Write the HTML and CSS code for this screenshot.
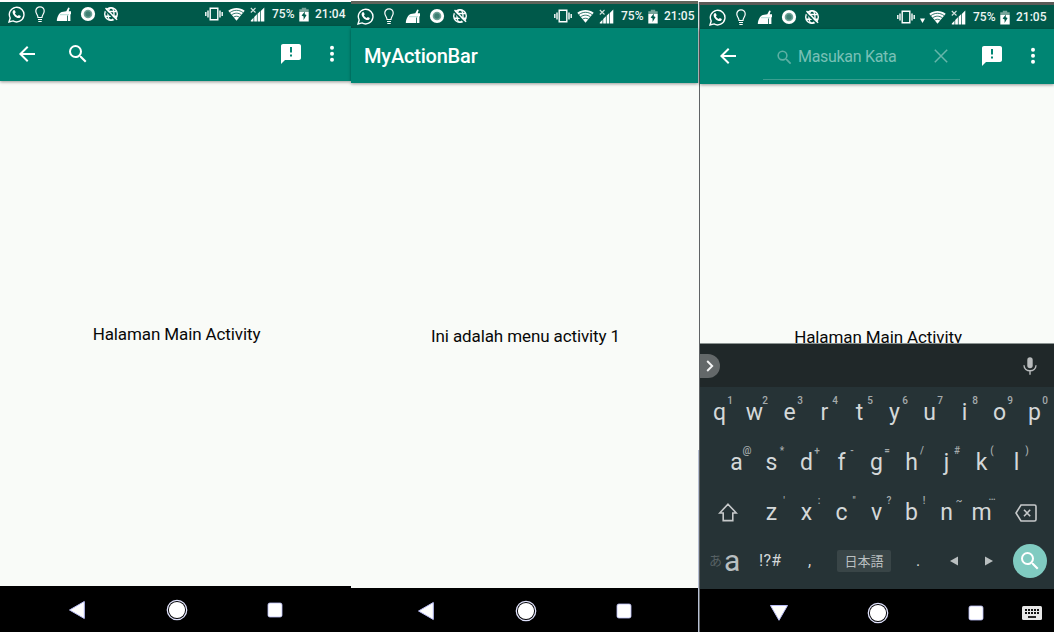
FILE: index.html
```
<!DOCTYPE html>
<html lang="id">
<head>
<meta charset="utf-8">
<title>MyActionBar</title>
<link rel="stylesheet" href="styles.css">
</head>
<body>
<svg class="defs" aria-hidden="true">
  <symbol id="whatsapp" viewBox="0 0 17 17"><path d="M1 16l1.200-4A7.300 7.300 0 1 1 5 14.900z" fill="none" stroke="#fff" stroke-width="1.400"/><path d="M5.600 4.300l1.200 0 .9 2-.8 1.100c.7 1.200 1.500 2 2.900 2.600l1-1 2 1c0 1.500-1 2-2 2.100C7.600 11.900 5 9 4.600 6.500c0-1 .4-1.800 1-2.200z" fill="#fff"/></symbol>
  <symbol id="bulb" viewBox="0 0 10 17"><path d="M3 11.500C3 9 .8 8 .8 5a4.200 4.200 0 0 1 8.400 0c0 3-2.200 4-2.200 6.500zM3 13.500h4M3.300 15.500h3.400" fill="none" stroke="#fff" stroke-width="1.200"/></symbol>
  <symbol id="broom" viewBox="0 0 16 16"><path d="M.8 15c.3-4 2-8 5-9l3-.5 1.500-.2L12.300 1.500l1.400.5-1 3.300h2.300v3h-.6V15H12V9.500h-.8V15z" fill="#fff"/><path d="M4 8.700h9" stroke="#7fc4b8" stroke-width=".6"/></symbol>
  <symbol id="record" viewBox="0 0 16 16"><circle cx="8" cy="8" r="7.100" fill="#fff"/><circle cx="8" cy="8" r="4.300" fill="#6fa398"/><circle cx="8" cy="8" r="2.700" fill="#3f7f73"/></symbol>
  <symbol id="globe" viewBox="0 0 16 16"><g fill="none" stroke="#fff" stroke-width="1.400"><circle cx="8" cy="8" r="6.300"/><ellipse cx="8" cy="8" rx="3" ry="6.200"/><path d="M2.500 5.500h11M2 10.300h12"/></g><path d="M1.500 3.200l11.500 11.600" stroke="#00594a" stroke-width="1.500"/><path d="M2.500 2l11.600 11.800" stroke="#fff" stroke-width="1.400"/></symbol>
  <symbol id="vibrate" viewBox="0 0 18 14"><path d="M5.200 1.200h7.600v11.600H5.200zM3 3.500v7M.8 5v4M15 3.500v7M17.200 5v4" fill="none" stroke="#fff" stroke-width="1.400"/></symbol>
  <symbol id="wifi" viewBox="0 0 17 14"><path d="M.3 3.700C5 0 12 0 16.700 3.700L8.500 13.700z" fill="#fff"/><path d="M1.800 5.700c4-3.200 9.400-3.200 13.400 0M3.600 7.900c3-2.300 6.800-2.300 9.800 0M5.500 10.200c1.800-1.300 4.200-1.300 6 0" fill="none" stroke="#00594a" stroke-width=".8"/></symbol>
  <symbol id="signal" viewBox="0 0 15 15"><path d="M.8 14.500v-1L3.500 10.800v3.700zM4.200 14.500V10l2.700-2.700v7.200zM7.600 14.500V6.700l2.700-2.700v10.500zM11 14.500V3.700L14.300.5v14z" fill="#fff"/><path d="M.8 1l4.700 4.500M5.500 1L.8 5.500" stroke="#d5e5e1" stroke-width="1.100"/></symbol>
  <symbol id="battery" viewBox="0 0 10 15"><path d="M.3 2.200h2.500V.7h4.400v1.500h2.500V5H.3z" fill="#78a59b"/><path d="M.3 5h9.400v9.500H.3z" fill="#fff"/><path d="M6 4.500L2.600 8.500l2 1v3.500l3-5-1.900-.7z" fill="#005b4c"/></symbol>
  <symbol id="back" viewBox="0 0 24 24"><path d="M20 11H7.830l5.590-5.590L12 4l-8 8 8 8 1.410-1.410L7.830 13H20z"/></symbol>
  <symbol id="search" viewBox="0 0 24 24"><path d="M15.500 14h-.79l-.28-.27A6.470 6.470 0 0 0 16 9.500 6.500 6.500 0 1 0 9.500 16c1.610 0 3.090-.59 4.230-1.570l.27.28v.79l5 4.990L20.490 19zm-6 0a4.500 4.500 0 1 1 0-9 4.500 4.500 0 0 1 0 9z"/></symbol>
  <symbol id="feedback" viewBox="0 0 24 24"><path d="M20 2H4c-1.100 0-2 .9-2 2v18l4-4h14c1.100 0 2-.9 2-2V4c0-1.100-.9-2-2-2zm-7 12.500h-2v-2h2zm0-4h-2V5h2z"/></symbol>
  <symbol id="more" viewBox="0 0 6 18"><circle cx="3" cy="2.700" r="2"/><circle cx="3" cy="8.700" r="2"/><circle cx="3" cy="14.700" r="2"/></symbol>
  <symbol id="nav-back" viewBox="0 0 18 20"><path d="M16.300 1.500v17L1.500 10z" fill="#fff" stroke="#b9bdf5" stroke-width="1" stroke-linejoin="round"/></symbol>
  <symbol id="nav-down" viewBox="0 0 20 18"><path d="M1.500 1.500h17L10 16.300z" fill="#fff" stroke="#b9bdf5" stroke-width="1" stroke-linejoin="round"/></symbol>
  <symbol id="nav-home" viewBox="0 0 22 22"><circle cx="11" cy="11" r="9.700" fill="none" stroke="#dfe1fb" stroke-width="1.300"/><circle cx="11" cy="11" r="8.100" fill="#fff"/></symbol>
  <symbol id="nav-recent" viewBox="0 0 16 16"><rect x="1" y="1" width="14" height="14" rx="1.800" fill="#fff" stroke="#b9bdf5" stroke-width=".8"/></symbol>
</svg>

<main class="screens">
  <section class="phone phone-main">
    <header class="status">
      <svg class="i-wa"><use href="#whatsapp"/></svg><svg class="i-bulb"><use href="#bulb"/></svg><svg class="i-broom"><use href="#broom"/></svg><svg class="i-dot"><use href="#record"/></svg><svg class="i-dot i-globe"><use href="#globe"/></svg>
      <span class="spacer"></span>
      <svg class="i-vib"><use href="#vibrate"/></svg><svg class="i-wifi"><use href="#wifi"/></svg><svg class="i-sig"><use href="#signal"/></svg><span class="percent">75%</span><svg class="i-bat"><use href="#battery"/></svg><span class="clock">21:04</span>
    </header>
    <div class="toolbar">
      <svg class="tool"><use href="#back"/></svg>
      <svg class="tool find"><use href="#search"/></svg>
      <span class="spacer"></span>
      <svg class="tool"><use href="#feedback"/></svg>
      <svg class="more"><use href="#more"/></svg>
    </div>
    <div class="content"><p>Halaman Main Activity</p></div>
    <nav class="nav"><svg class="n-back"><use href="#nav-back"/></svg><svg class="n-home"><use href="#nav-home"/></svg><svg class="n-recent"><use href="#nav-recent"/></svg></nav>
  </section>

  <section class="phone phone-menu">
    <header class="status">
      <svg class="i-wa"><use href="#whatsapp"/></svg><svg class="i-bulb"><use href="#bulb"/></svg><svg class="i-broom"><use href="#broom"/></svg><svg class="i-dot"><use href="#record"/></svg><svg class="i-dot i-globe"><use href="#globe"/></svg>
      <span class="spacer"></span>
      <svg class="i-vib"><use href="#vibrate"/></svg><svg class="i-wifi"><use href="#wifi"/></svg><svg class="i-sig"><use href="#signal"/></svg><span class="percent">75%</span><svg class="i-bat"><use href="#battery"/></svg><span class="clock">21:05</span>
    </header>
    <div class="toolbar"><h1>MyActionBar</h1></div>
    <div class="content"><p>Ini adalah menu activity 1</p></div>
    <nav class="nav"><svg class="n-back"><use href="#nav-back"/></svg><svg class="n-home"><use href="#nav-home"/></svg><svg class="n-recent"><use href="#nav-recent"/></svg></nav>
  </section>

  <div class="divider"></div>

  <section class="phone phone-search">
    <header class="status">
      <svg class="i-wa"><use href="#whatsapp"/></svg><svg class="i-bulb"><use href="#bulb"/></svg><svg class="i-broom"><use href="#broom"/></svg><svg class="i-dot"><use href="#record"/></svg><svg class="i-dot i-globe"><use href="#globe"/></svg>
      <span class="spacer"></span>
      <svg class="i-vib"><use href="#vibrate"/></svg><svg class="i-arrow" viewBox="0 0 5 5"><path d="M0 .5h5L2.500 5z" fill="#fff"/></svg><svg class="i-wifi"><use href="#wifi"/></svg><svg class="i-sig"><use href="#signal"/></svg><span class="percent">75%</span><svg class="i-bat"><use href="#battery"/></svg><span class="clock">21:05</span>
    </header>
    <div class="toolbar">
      <svg class="tool"><use href="#back"/></svg>
      <div class="field">
        <svg class="hint-icon"><use href="#search"/></svg>
        <span class="hint">Masukan Kata</span>
        <svg class="clear" viewBox="0 0 14 14"><path d="M.8.8l12.400 12.400M13.200.8L.8 13.200" stroke="#66b6ab" stroke-width="1.500"/></svg>
      </div>
      <span class="spacer"></span>
      <svg class="tool"><use href="#feedback"/></svg>
      <svg class="more"><use href="#more"/></svg>
    </div>
    <div class="content"><p>Halaman Main Activity</p></div>
    <div class="keyboard">
      <div class="suggest">
        <span class="expand"><svg viewBox="0 0 8 12"><path d="M1.200 1l5 5-5 5" fill="none" stroke="#f4f5f5" stroke-width="1.900"/></svg></span>
        <svg class="mic" viewBox="0 0 14 18"><rect x="4.300" y=".3" width="5.400" height="11" rx="2.700" fill="#b9bcbd"/><path d="M1 8.300c0 7.200 12 7.200 12 0M7 13.500v4.300" fill="none" stroke="#b9bcbd" stroke-width="1.400"/></svg>
      </div>
      <div class="row">
        <span class="key">q<sup>1</sup></span><span class="key">w<sup>2</sup></span><span class="key">e<sup>3</sup></span><span class="key">r<sup>4</sup></span><span class="key">t<sup>5</sup></span><span class="key">y<sup>6</sup></span><span class="key">u<sup>7</sup></span><span class="key">i<sup>8</sup></span><span class="key">o<sup>9</sup></span><span class="key">p<sup>0</sup></span>
      </div>
      <div class="row home-row">
        <span class="key">a<sup>@</sup></span><span class="key">s<sup>*</sup></span><span class="key">d<sup>+</sup></span><span class="key">f<sup>-</sup></span><span class="key">g<sup>=</sup></span><span class="key">h<sup>/</sup></span><span class="key">j<sup>#</sup></span><span class="key">k<sup>(</sup></span><span class="key">l<sup>)</sup></span>
      </div>
      <div class="row third-row">
        <span class="wide"><svg class="shift" viewBox="0 0 20 19"><path d="M10 1.200L18.300 10H14.800v7.600H5.200V10H1.700z" fill="none" stroke="#c6c9ca" stroke-width="1.600"/></svg></span><span class="key">z<sup>'</sup></span><span class="key">x<sup>:</sup></span><span class="key">c<sup>"</sup></span><span class="key">v<sup>?</sup></span><span class="key">b<sup>!</sup></span><span class="key">n<sup>~</sup></span><span class="key">m<sup class="dots">…</sup></span><span class="wide erase"><svg viewBox="0 0 22 18"><path d="M6 1h13.500q1.500 0 1.500 1.500v13q0 1.500-1.500 1.500H6L1 9zM9 5.800l6.200 6.400M15.200 5.800L9 12.200" fill="none" stroke="#c6c9ca" stroke-width="1.600"/></svg></span>
      </div>
      <div class="row bottom-row">
        <span class="mode"><small>あ</small>a</span><span class="symbols">!?#</span><span class="comma">,</span><span class="space">日本語</span><span class="period">.</span><svg class="caret" viewBox="0 0 8 10"><path d="M8 .5v9L0 5z" fill="#b9bfc0"/></svg><svg class="caret next" viewBox="0 0 8 10"><path d="M0 .5v9L8 5z" fill="#b9bfc0"/></svg><span class="go"><svg><use href="#search"/></svg></span>
      </div>
    </div>
    <nav class="nav"><svg class="n-down"><use href="#nav-down"/></svg><svg class="n-home"><use href="#nav-home"/></svg><svg class="n-recent"><use href="#nav-recent"/></svg><svg class="n-kbd" viewBox="0 0 20 14"><rect width="20" height="14" rx="1.500" fill="#e7e7e7"/><path d="M3 4h14M3 7h14" stroke="#111" stroke-width="2" stroke-dasharray="2 1"/><path d="M6 11h8" stroke="#111" stroke-width="1.800"/></svg></nav>
  </section>
</main>
</body>
</html>
```

FILE: styles.css
```
* { box-sizing: border-box; }
body { margin: 0; background: #fff; font-family: Roboto, "Noto Sans CJK JP", sans-serif; }
svg { display: block; flex: none; }
.defs { position: absolute; width: 0; height: 0; }
.screens { display: flex; width: 1054px; height: 632px; overflow: hidden; }
.phone { display: flex; flex-direction: column; background: #f9fbf8; }
.phone-main { width: 351px; border-top: 2px solid #fdfdfd; }
.phone-menu { width: 347px; margin-top: 1px; border-top: 3px solid #60645b; }
.phone-search { width: 354px; margin-top: 2px; border-top: 3px solid #5b5b58; }
.divider { width: 2px; margin-top: 2px; background: linear-gradient(#606365, #606365) right / 1px 100% no-repeat, linear-gradient(#d5e0e2 0 81px, #f9fbf8 81px 448px, #b6bfd3 448px); }
.spacer { flex: 1; }

.status { display: flex; align-items: center; flex: none; height: 24px; padding-left: 8px; padding-right: 3px; background: #00594a; color: #eef6f3; font-size: 12px; font-weight: 500; line-height: 24px; }
.phone-menu .status { padding-left: 6px; padding-right: 1px; }
.phone-search .status { padding-left: 9px; padding-right: 5px; }
.i-wa { width: 17px; height: 17px; }
.i-bulb { width: 10px; height: 17px; margin-left: 10px; }
.i-broom { width: 16px; height: 16px; margin-left: 11px; }
.i-dot { width: 16px; height: 16px; margin-left: 8px; }
.i-globe { margin-left: 7px; }
.i-vib { width: 18px; height: 14px; }
.i-wifi { width: 17px; height: 14px; margin-left: 5px; }
.i-arrow { width: 5px; height: 5px; margin: 7px -1px 0 5px; }
.i-sig { width: 15px; height: 15px; margin-left: 5px; }
.percent { width: 24px; margin-left: 7px; white-space: nowrap; }
.i-bat { width: 10px; height: 15px; margin-left: 3px; }
.clock { width: 33px; margin-left: 6px; white-space: nowrap; }

.toolbar { display: flex; align-items: center; flex: none; height: 55px; padding: 0 16px 0 15px; background: #008573; box-shadow: 0 1px 3px rgba(0, 0, 0, .4); z-index: 1; color: #fff; }
.phone-search .toolbar { padding: 0 18px 2px 16px; }
.tool { width: 24px; height: 24px; fill: #fff; }
.find { margin-left: 27px; }
.more { width: 6px; height: 18px; margin-left: 26px; fill: #fff; }
.toolbar h1 { margin: 0 0 0 -2px; font-size: 20px; line-height: 28px; font-weight: 500; letter-spacing: -.2px; }
.content { flex: 1; display: flex; align-items: center; justify-content: center; min-height: 0; padding-left: 2px; color: #080808; font-size: 17px; line-height: 20px; letter-spacing: -.11px; }
.content p { margin: 0; white-space: nowrap; }
.nav { display: flex; align-items: center; flex: none; height: 46px; padding: 2px 0 0 68px; background: #000; }
.phone-menu .nav { height: 44px; padding-left: 66px; }
.n-back { width: 18px; height: 20px; }
.n-home { width: 22px; height: 22px; margin-left: 79.500px; }
.n-recent { width: 16px; height: 16px; margin-left: 79.500px; }

.phone-search .nav { height: 43px; padding: 4px 0 0 69px; }
.n-down { width: 20px; height: 18px; }
.phone-search .n-home { margin-left: 77.500px; }
.n-kbd { width: 20px; height: 14px; margin-left: 38px; }
.field { display: flex; align-items: center; width: 197px; height: 47px; margin: 1px 0 0 23px; padding: 3px 0 0 12px; border-bottom: 1px solid #3b9f90; }
.hint-icon { width: 19px; height: 19px; fill: #5db0a4; }
.hint { width: 100px; margin-left: 4px; color: #78c0b6; font-size: 16px; line-height: 20px; letter-spacing: -.3px; white-space: nowrap; }
.clear { width: 14px; height: 14px; margin: -3px 0 0 36px; }
.phone-search .content { align-items: flex-start; padding: 243px 0 0 2px; overflow: hidden; }

.keyboard { flex: none; height: 246px; background: #263336; color: #d4d8d9; }
.suggest { display: flex; align-items: center; justify-content: space-between; height: 44px; padding-right: 17px; background: #202829; border-top: 1px solid #8b9391; }
.expand { display: flex; align-items: center; width: 20px; height: 24px; padding-left: 6px; background: #636869; border-radius: 0 12px 12px 0; }
.expand svg { width: 8px; height: 12px; }
.mic { width: 14px; height: 18px; }
.row { display: flex; height: 50px; padding-left: 2px; }
.home-row { padding-left: 19px; }
.key { position: relative; width: 35px; padding-top: 1px; font-size: 23px; line-height: 50px; text-align: center; }
.key sup { position: absolute; top: 8px; left: 20px; width: 16px; color: #a5abac; font-size: 10px; font-weight: 500; line-height: 12px; text-align: center; }
.third-row .key sup { left: 22px; }
.third-row .key .dots { top: 4px; left: 20px; }
.wide { display: flex; align-items: center; justify-content: center; width: 52px; }
.third-row .erase { width: 54px; }
.shift { width: 20px; height: 19px; }
.erase svg { width: 22px; height: 18px; margin-top: 1px; }
.bottom-row { align-items: center; padding: 0 7px 0 9px; height: 47px; }
.mode { display: flex; align-items: center; width: 50px; color: #b9bfc0; font-size: 30px; line-height: 45px; }
.mode small { width: 13px; margin-right: 2px; color: #576164; font-size: 13px; line-height: 20px; }
.symbols { width: 26px; font-size: 16px; letter-spacing: .3px; white-space: nowrap; }
.comma { width: 5px; margin-left: 23px; font-size: 16px; }
.space { width: 54px; height: 22px; margin-left: 24px; border-radius: 2px; background: #394547; color: #b9bfc0; font: 13px/22px "Noto Sans CJK JP", sans-serif; text-align: center; }
.period { width: 5px; margin-left: 25px; font-size: 16px; }
.caret { width: 8px; height: 10px; margin-left: 29px; }
.next { margin-left: 27px; }
.go { display: flex; align-items: center; justify-content: center; width: 34px; height: 34px; margin-left: auto; border-radius: 50%; background: #80cbc1; }
.go svg { width: 24px; height: 24px; fill: #fff; }
```
